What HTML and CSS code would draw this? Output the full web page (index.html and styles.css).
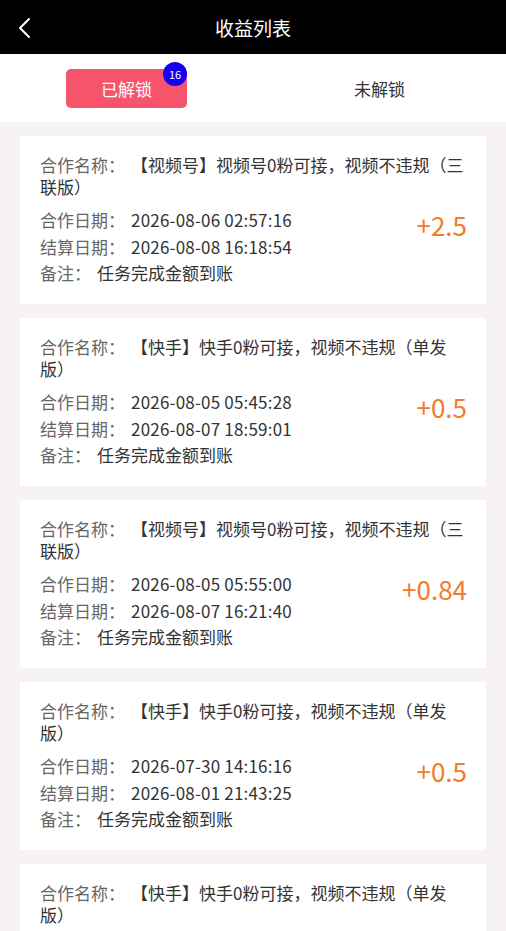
FILE: index.html
```html
<!DOCTYPE html>
<html lang="zh-CN">
<head>
  <meta charset="UTF-8">
  <meta name="viewport" content="width=device-width, initial-scale=1.0">
  <title>收益列表</title>
  <link rel="stylesheet" href="styles.css">
</head>
<body>
  <header class="nav-bar">
    <a class="back" href="#">
      <svg width="16" height="24" viewBox="0 0 16 24"><polyline points="13,3 4,12 13,21" fill="none" stroke="#fff" stroke-width="2" stroke-linecap="round" stroke-linejoin="round"/></svg>
    </a>
    <h1>收益列表</h1>
  </header>

  <div class="tabs">
    <div class="tab">
      <span class="pill active">已解锁<i class="badge">16</i></span>
    </div>
    <div class="tab">
      <span class="pill">未解锁</span>
    </div>
  </div>

  <div class="list" id="list"></div>

  <script>
    const items = [
      { name: '【视频号】视频号0粉可接，视频不违规（三联版）', start: '2026-08-06 02:57:16', end: '2026-08-08 16:18:54', money: '+2.5' },
      { name: '【快手】快手0粉可接，视频不违规（单发版）', start: '2026-08-05 05:45:28', end: '2026-08-07 18:59:01', money: '+0.5' },
      { name: '【视频号】视频号0粉可接，视频不违规（三联版）', start: '2026-08-05 05:55:00', end: '2026-08-07 16:21:40', money: '+0.84' },
      { name: '【快手】快手0粉可接，视频不违规（单发版）', start: '2026-07-30 14:16:16', end: '2026-08-01 21:43:25', money: '+0.5' },
      { name: '【快手】快手0粉可接，视频不违规（单发版）', start: '2026-07-29 10:12:33', end: '2026-07-31 19:05:47', money: '+0.5' }
    ];

    const list = document.getElementById('list');
    items.forEach(it => {
      const card = document.createElement('div');
      card.className = 'card';
      card.innerHTML = `
        <p class="name"><span class="label">合作名称：</span>${it.name}</p>
        <div class="bottom">
          <div class="rows">
            <p><span class="label">合作日期：</span><span class="num">${it.start}</span></p>
            <p><span class="label">结算日期：</span><span class="num">${it.end}</span></p>
            <p><span class="label">备注：</span>任务完成金额到账</p>
          </div>
          <div class="money">${it.money}</div>
        </div>`;
      list.appendChild(card);
    });
  </script>
</body>
</html>
```

FILE: styles.css
```css
body {
  margin: 0;
  font-family: "Noto Sans CJK SC", "Noto Sans", sans-serif;
  background: #f7f2f5;
  color: #333;
  overflow: hidden;
  text-spacing-trim: space-all;
}
p {
  margin: 0;
}
.nav-bar {
  height: 54px;
  background: #000;
  display: flex;
  align-items: center;
  justify-content: center;
  position: relative;
}
.nav-bar h1 {
  margin: 0;
  font-size: 19px;
  font-weight: 400;
  color: #fff;
}
.back {
  position: absolute;
  left: 16px;
  top: 16px;
  display: flex;
}
.tabs {
  height: 68px;
  background: #fff;
  display: flex;
}
.tab {
  flex: 1;
  display: flex;
  align-items: center;
  justify-content: center;
}
.pill {
  position: relative;
  width: 121px;
  height: 39px;
  border-radius: 5px;
  display: flex;
  align-items: center;
  justify-content: center;
  font-size: 17px;
  color: #333;
}
.pill.active {
  background: #f6546b;
  color: #fff;
}
.badge {
  position: absolute;
  right: 0;
  top: -7px;
  width: 24px;
  height: 24px;
  border-radius: 50%;
  background: #1500f0;
  color: #fff;
  font-style: normal;
  font-size: 11px;
  line-height: 24px;
  text-align: center;
}
.list {
  padding: 14px 20px;
  display: flex;
  flex-direction: column;
  gap: 14.5px;
}
.card {
  background: #fff;
  padding: 18px 20px 17px;
  font-size: 17px;
}
.label {
  color: #666;
  margin-right: 6px;
}
.num {
  letter-spacing: 0.2px;
}
.name {
  line-height: 22px;
  color: #333;
}
.bottom {
  margin-top: 9px;
  display: flex;
  justify-content: space-between;
  align-items: flex-start;
}
.rows p {
  line-height: 26.5px;
}
.money {
  font-size: 26px;
  line-height: 36px;
  margin-right: -1px;
  color: #f47a2c;
}
```
